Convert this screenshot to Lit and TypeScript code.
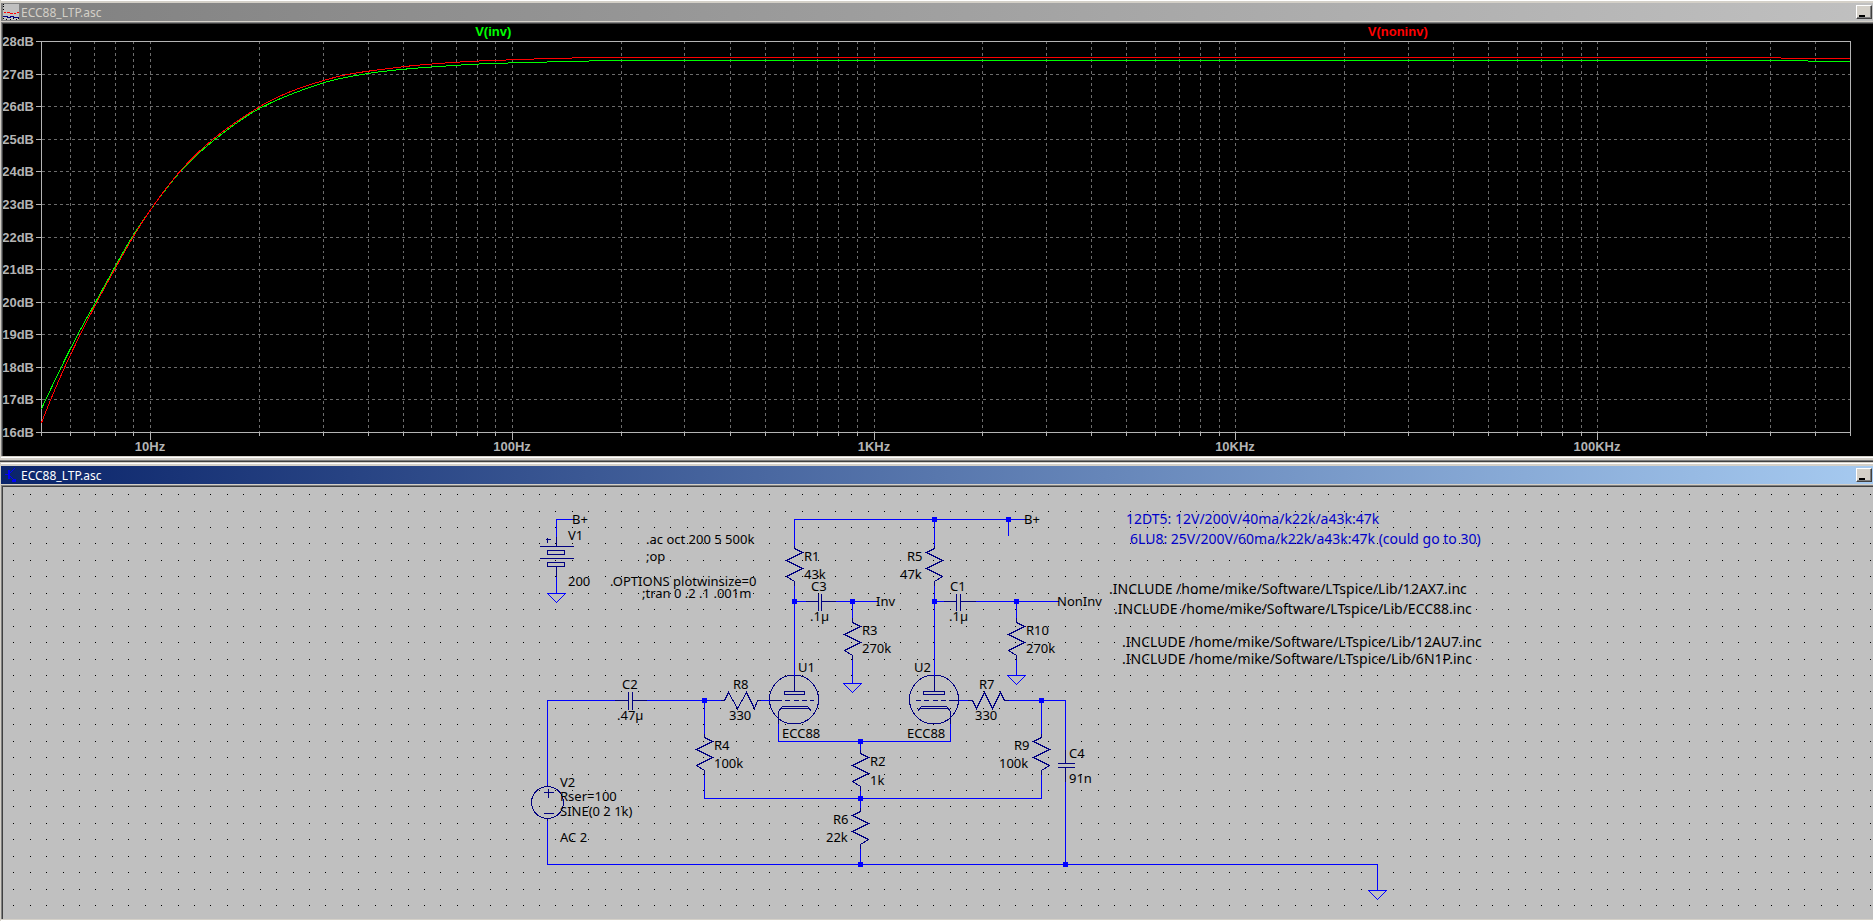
import { LitElement, html, css, svg } from "lit";
import { customElement, property, state } from "lit/decorators.js";

/** Base for panes whose drawing is computed from their own size. */
class SizedPane extends LitElement {
  @state() protected w = 0;
  @state() protected h = 0;
  private observer?: ResizeObserver;

  connectedCallback() {
    super.connectedCallback();
    this.observer = new ResizeObserver(() => this.measure());
    this.observer.observe(this);
  }

  disconnectedCallback() {
    this.observer?.disconnect();
    super.disconnectedCallback();
  }

  protected firstUpdated() {
    this.measure();
  }

  private measure() {
    this.w = this.clientWidth;
    this.h = this.clientHeight;
  }
}

type Sample = [decades: number, db: number];

/* Samples are [decades above the start frequency, gain in dB]. */
const INV: Sample[] = [
  [0, 16.73], [0.054, 17.99], [0.1, 19], [0.149, 19.99], [0.199, 21],
  [0.246, 21.92], [0.301, 22.83], [0.384, 24.01], [0.478, 24.98], [0.605, 25.96],
  [0.779, 26.73], [0.904, 27.02], [1.003, 27.15], [1.147, 27.27], [1.255, 27.33],
  [1.5, 27.4], [1.7, 27.42], [4.85, 27.42], [4.9, 27.39], [5, 27.38],
];
const NONINV: Sample[] = [
  [0, 16.3], [0.03, 17.13], [0.064, 18], [0.108, 19.02], [0.153, 20],
  [0.202, 21], [0.249, 21.92], [0.301, 22.83], [0.384, 24.03], [0.475, 25.01],
  [0.603, 26], [0.69, 26.47], [0.779, 26.8], [0.851, 27], [1.003, 27.23],
  [1.081, 27.31], [1.186, 27.39], [1.26, 27.42], [1.324, 27.45], [1.5, 27.5],
  [1.7, 27.51], [4.78, 27.51], [4.83, 27.48], [5, 27.47],
];

@customElement("gain-plot")
export class GainPlot extends SizedPane {
  static styles = css`
    :host { display: block; background: #000; overflow: hidden; min-height: 0; }
    svg { display: block; width: 100%; height: 100%; font: bold 13px "Liberation Sans", Arial, sans-serif; }
    .frame { fill: none; stroke: #b4b4b4; }
    .grid { fill: none; stroke: #6c6c6c; stroke-dasharray: 3 3; }
    .label { fill: #b4b4b4; }
    .inv { stroke: #00ff00; }
    .noninv { stroke: #ff0000; }
    .trace { fill: none; }
    .name-inv { fill: #00ff00; }
    .name-noninv { fill: #ff0000; }
  `;

  private static readonly fMin = 5;
  private static readonly fMax = 500000;
  private static readonly dbMin = 16;
  private static readonly dbMax = 28;

  private trace(samples: Sample[], x: (t: number) => number, y: (db: number) => number) {
    const p = samples.map(([t, db]) => [x(t), y(db)]);
    const slope = p.map((_, i) => {
      const a = p[Math.max(0, i - 1)];
      const b = p[Math.min(p.length - 1, i + 1)];
      return (b[1] - a[1]) / (b[0] - a[0]);
    });
    let d = `M${p[0][0]} ${p[0][1]}`;
    for (let i = 1; i < p.length; i++) {
      const [x0, y0] = p[i - 1];
      const [x1, y1] = p[i];
      const dx = (x1 - x0) / 3;
      d += dx > 60
        ? `L${x1} ${y1}`
        : `C${x0 + dx} ${y0 + slope[i - 1] * dx} ${x1 - dx} ${y1 - slope[i] * dx} ${x1} ${y1}`;
    }
    return d;
  }

  render() {
    const { fMin, fMax, dbMin, dbMax } = GainPlot;
    const left = 38, top = 17;
    const right = this.w - 23, bottom = this.h - 24;
    if (right <= left || bottom <= top) return html`<svg></svg>`;
    const decades = Math.log10(fMax / fMin);
    const x = (t: number) => left + (t / decades) * (right - left);
    const y = (db: number) => top + ((dbMax - db) / (dbMax - dbMin)) * (bottom - top);

    let grid = "", ticks = "";
    const dbs: number[] = [];
    for (let db = dbMin; db <= dbMax; db++) {
      const py = Math.round(y(db));
      dbs.push(db);
      ticks += `M${left - 6} ${py}H${left}`;
      if (db > dbMin && db < dbMax) grid += `M${left} ${py}H${right}`;
    }
    const majors: [string, number][] = [];
    for (let base = 1; base <= fMax; base *= 10) {
      for (let m = 1; m < 10; m++) {
        const f = base * m;
        if (f < fMin || f > fMax) continue;
        const px = Math.round(x(Math.log10(f / fMin)));
        ticks += `M${px} ${bottom}v${m === 1 ? 7 : 3}`;
        if (f > fMin && f < fMax) grid += `M${px} ${top - 1}V${bottom}`;
        if (m === 1) majors.push([f >= 1000 ? `${f / 1000}KHz` : `${f}Hz`, px]);
      }
    }

    return html`<svg role="img" aria-label="Gain against frequency">
      <g transform="translate(0.5 0.5)" shape-rendering="crispEdges">
        <path class="grid" d=${grid}></path>
        <path class="frame" d=${ticks}></path>
        <rect class="frame" x=${left} y=${top} width=${right - left} height=${bottom - top}></rect>
        <path class="trace inv" d=${this.trace(INV, x, y)}></path>
        <path class="trace noninv" d=${this.trace(NONINV, x, y)}></path>
      </g>
      <text class="name-inv" x=${x(decades / 4)} y="12" text-anchor="middle">V(inv)</text>
      <text class="name-noninv" x=${x((decades * 3) / 4)} y="12" text-anchor="middle">V(noninv)</text>
      ${dbs.map((db) => svg`<text class="label" x=${left - 7} y=${Math.round(y(db)) + 5} text-anchor="end">${db}dB</text>`)}
      ${majors.map(([name, px]) => svg`<text class="label" x=${px} y=${bottom + 19} text-anchor="middle">${name}</text>`)}
    </svg>`;
  }
}

/* Sheet coordinates of the pane's top left corner. */
const ORIGIN_X = 3;
const ORIGIN_Y = 487;
const PITCH = 16.43;

const WIRES = [
  "M573 519H556V536M556 576V593",
  "M794 545V519H1025M934 519V545M1008 519V535",
  "M794 585V675M934 585V675",
  "M794 601H805M835 601H877M852 601V617M852 659V683",
  "M934 601H943M975 601H1058M1016 601V617M1016 659V675",
  "M614 700H547V784M547 820V864H1377V890",
  "M646 700H720M704 700V733M704 774V798H1041V774M1041 733V700",
  "M760 700H769M778 723V741H950V723",
  "M860 741V749M860 790V807M860 848V864",
  "M958 700H967M1008 700H1065V749M1065 781V864",
].join("");

const NODES = [
  [934, 519], [1008, 519], [794, 601], [852, 601], [934, 601], [1016, 601],
  [704, 700], [1041, 700], [860, 741], [860, 798], [860, 864], [1065, 864],
];

/* Upright resistors: x, top of the zigzag, side of the first peak. */
const RESISTORS = [
  [794, 548, 1], [934, 548, -1], [852, 622, 1], [1016, 622, 1],
  [704, 737, 1], [1041, 737, -1], [860, 753, 1], [860, 811, -1],
];

const GROUNDS = [[556, 593], [852, 683], [1016, 675], [1377, 890]];

const SYMBOLS = [
  // V1 battery
  "M556 536V546M539 546H573M547 550H564V554H547ZM539 558H573M547 562H564V566H547ZM556 566V576M545 539H550M547 537V542",
  // capacitors
  "M805 601H818M818 593V610M821 593V610M821 601H835",
  "M943 601H956M956 593V610M960 593V610M960 601H975",
  "M614 700H628M628 691V709M632 691V709M632 700H646",
  "M1065 749V763M1057 763H1074M1057 767H1074M1065 767V781",
  // R8 and R7
  "M720 700H724L728 692L737 708L746 692L754 708L757 700H761",
  "M967 700H972L976 708L984 692L992 708L1000 692L1004 700H1008",
  // V2 polarity marks
  "M547 784V786M547 818V820M543 792H553M548 788V797M543 813H553",
  // U1
  "M794 675V691M784 691H804V694H784ZM769 700H781M784 700H789M793 700H798M801 700H806M809 700H813M778 723V711L782 706H807L811 711M780 708H809",
  // U2
  "M934 675V691M923 691H944V694H923ZM915 700H920M923 700H928M932 700H937M940 700H945M948 700H958M950 723V711L946 706H921L917 711M919 708H948",
].join("");

const LABELS: [number, number, string][] = [
  [572, 524, "B+"], [568, 540, "V1"], [568, 586, "200"],
  [646, 544, ".ac oct 200 5 500k"], [646, 561, ";op"],
  [610, 586, ".OPTIONS plotwinsize=0"], [642, 598, ";tran 0 .2 .1 .001m"],
  [804, 561, "R1"], [804, 579, "43k"], [811, 591, "C3"], [810, 621, ".1µ"],
  [876, 606, "Inv"], [862, 635, "R3"], [862, 653, "270k"],
  [907, 561, "R5"], [900, 579, "47k"], [950, 591, "C1"], [949, 621, ".1µ"],
  [1057, 606, "NonInv"], [1026, 635, "R10"], [1026, 653, "270k"], [1024, 524, "B+"],
  [798, 672, "U1"], [914, 672, "U2"],
  [622, 689, "C2"], [617, 720, ".47µ"], [733, 689, "R8"], [729, 720, "330"],
  [782, 738, "ECC88"], [907, 738, "ECC88"], [714, 750, "R4"], [714, 768, "100k"],
  [560, 787, "V2"], [560, 801, "Rser=100"], [560, 816, "SINE(0 2 1k)"], [560, 842, "AC 2"],
  [979, 689, "R7"], [975, 720, "330"], [1014, 750, "R9"], [999, 768, "100k"],
  [1069, 758, "C4"], [1069, 783, "91n"], [870, 766, "R2"], [870, 785, "1k"],
  [833, 824, "R6"], [826, 842, "22k"],
];

const DIRECTIVES: [number, number, string][] = [
  [1109, 594, ".INCLUDE /home/mike/Software/LTspice/Lib/12AX7.inc"],
  [1114, 614, ".INCLUDE /home/mike/Software/LTspice/Lib/ECC88.inc"],
  [1122, 647, ".INCLUDE /home/mike/Software/LTspice/Lib/12AU7.inc"],
  [1122, 664, ".INCLUDE /home/mike/Software/LTspice/Lib/6N1P.inc"],
];

const COMMENTS: [number, number, string][] = [
  [1126, 524, "12DT5: 12V/200V/40ma/k22k/a43k:47k"],
  [1130, 544, "6LU8: 25V/200V/60ma/k22k/a43k:47k (could go to 30)"],
];

@customElement("schematic-sheet")
export class SchematicSheet extends SizedPane {
  static styles = css`
    :host { display: block; background: #c0c0c0; overflow: hidden; min-height: 0; }
    svg { display: block; width: 100%; height: 100%; font: 13px "Noto Sans", "DejaVu Sans", sans-serif; }
    .dots { stroke: #000; }
    .wire { fill: none; stroke: #0000ff; }
    .node { fill: #0000ff; }
    .symbol { fill: none; stroke: #000080; }
    .label { fill: #000; }
    .directive { fill: #000; font-size: 14px; }
    .comment { fill: #0000c8; font-size: 14px; }
  `;

  render() {
    let dots = "";
    for (let y = 7.7; y < this.h; y += PITCH) {
      for (let x = 10.75; x < this.w; x += PITCH) {
        dots += `M${Math.floor(x)} ${Math.floor(y) + 0.5}h1`;
      }
    }
    const resistors = RESISTORS.map(([x, t, s]) => {
      const a = x + 8 * s, b = x - 8 * s;
      return `M${x} ${t - 5}V${t}L${a} ${t + 4}L${b} ${t + 12}L${a} ${t + 20}L${b} ${t + 28}L${x} ${t + 33}V${t + 38}`;
    }).join("");
    const grounds = GROUNDS.map(([x, y]) => `M${x - 9} ${y}H${x + 9}L${x} ${y + 9}Z`).join("");
    const texts = (name: string, rows: [number, number, string][]) =>
      rows.map(([x, y, t]) => svg`<text class=${name} x=${x} y=${y}>${t}</text>`);

    return html`<svg role="img" aria-label="ECC88 long-tailed pair schematic">
      <path class="dots" shape-rendering="crispEdges" d=${dots}></path>
      <g transform="translate(${0.5 - ORIGIN_X} ${0.5 - ORIGIN_Y})" shape-rendering="crispEdges">
        <path class="symbol" d=${SYMBOLS + resistors}></path>
        <circle class="symbol" cx="547" cy="802" r="16"></circle>
        <circle class="symbol" cx="793.500" cy="699" r="24.500"></circle>
        <circle class="symbol" cx="933.500" cy="699" r="24.500"></circle>
        <path class="wire" d=${WIRES + grounds}></path>
        ${NODES.map(([x, y]) => svg`<rect class="node" x=${x - 2.5} y=${y - 2.5} width="5" height="5"></rect>`)}
      </g>
      <g transform="translate(${-ORIGIN_X} ${-ORIGIN_Y})">
        ${texts("label", LABELS)}
        ${texts("directive", DIRECTIVES)}
        ${texts("comment", COMMENTS)}
      </g>
    </svg>`;
  }
}

@customElement("mdi-window")
export class MdiWindow extends LitElement {
  @property() heading = "";
  @property({ type: Boolean, reflect: true }) active = false;

  static styles = css`
    :host {
      display: flex; flex-direction: column; box-sizing: border-box; min-width: 0; min-height: 0;
      border-left: 1px solid #d4d0c8; background: #d4d0c8;
      font: 12px/18px "Noto Sans", "DejaVu Sans", sans-serif;
    }
    .edge { height: 1px; flex: none; background: #fff; border-bottom: 2px solid #d4d0c8; }
    header {
      display: flex; align-items: center; flex: none; height: 18px; gap: 2px; padding: 0 1px 0 2px;
      color: #d4d0c8; background: linear-gradient(90deg, #808080, #c0c0c0);
    }
    :host([active]) header { color: #fff; background: linear-gradient(90deg, #0a246a, #a6caf0); }
    .icon { flex: none; width: 16px; height: 16px; }
    h1 { flex: 1; margin: 0; padding-top: 2px; font: inherit; white-space: nowrap; }
    button {
      flex: none; display: block; box-sizing: border-box; width: 16px; height: 14px; padding: 8px 0 0 2px;
      border: 1px solid; border-color: #fff #404040 #404040 #fff; background: #d4d0c8;
      box-shadow: inset -1px -1px #808080;
    }
    .bar { display: block; width: 6px; height: 2px; background: #000; }
    .client {
      flex: 1; min-height: 0; display: grid; margin-top: 1px;
      border: solid #808080; border-width: 1px 0 0 1px;
    }
    .well { display: grid; min-height: 0; min-width: 0; border: solid #404040; border-width: 1px 0 0 1px; }
    .foot { flex: none; height: 1px; background: #fff; border-top: 1px solid #d4d0c8; }
  `;

  render() {
    const icon = this.active
      ? html`<svg class="icon" viewBox="0 0 16 16" shape-rendering="crispEdges">
          <path d="M5 3h2v9h-2zM2 7h3v1h-3zM10 12l3 0v3l-4 0z" fill="#0000ff"></path>
          <path d="M7 6L12 1M7 9L11 13" fill="none" stroke="#0000ff"></path>
        </svg>`
      : html`<svg class="icon" viewBox="0 0 16 16" shape-rendering="crispEdges">
          <rect width="16" height="16" fill="#c0c0c0"></rect>
          <path d="M0 .5h1M0 2.500h1M0 5.500h1M0 14.500h1M3 15.500h1M7 15.500h1M10 14.500h1M13 15.500h1M15 14.500h1" stroke="#000"></path>
          <path d="M1 8.500h2M4 8.500h3M7 9.500h3M11 9.500h2M14 8.500h2" stroke="#ff0000"></path>
          <path d="M0 12.500h5M4 13.500h4M7 12.500h4M10 13.500h6" stroke="#000080"></path>
        </svg>`;
    return html`
      <div class="edge"></div>
      <header>
        ${icon}
        <h1>${this.heading}</h1>
        <button type="button" aria-label="Minimize"><span class="bar"></span></button>
      </header>
      <div class="client"><div class="well"><slot></slot></div></div>
      <div class="foot"></div>
    `;
  }
}

@customElement("app-root")
export class AppRoot extends LitElement {
  static styles = css`
    :host { display: grid; height: 100vh; grid-template-rows: 1fr auto 1fr; background: #d4d0c8; overflow: hidden; }
    .gap { height: 5px; box-sizing: border-box; border-top: 2px solid #d4d0c8; background: linear-gradient(#808080 1px, #404040 1px 2px, #d4d0c8 2px); }
  `;

  render() {
    return html`
      <mdi-window heading="ECC88_LTP.asc"><gain-plot></gain-plot></mdi-window>
      <div class="gap"></div>
      <mdi-window heading="ECC88_LTP.asc" active><schematic-sheet></schematic-sheet></mdi-window>
    `;
  }
}
